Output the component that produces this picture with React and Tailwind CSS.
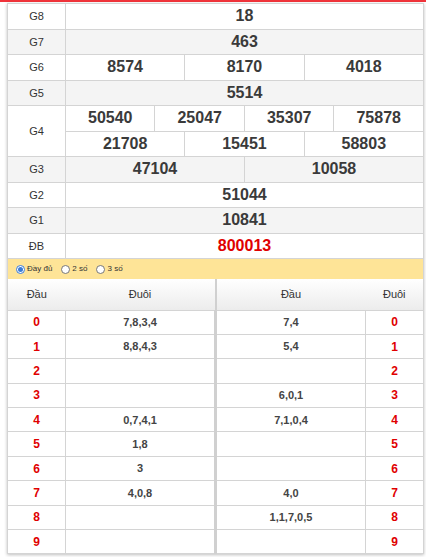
import React from 'react';

const prizes = [
    { label: 'G8', nums: ['18'] },
    { label: 'G7', nums: ['463'] },
    { label: 'G6', nums: ['8574', '8170', '4018'] },
    { label: 'G5', nums: ['5514'] },
    { label: 'G4', nums: ['50540', '25047', '35307', '75878'], more: ['21708', '15451', '58803'] },
    { label: 'G3', nums: ['47104', '10058'] },
    { label: 'G2', nums: ['51044'] },
    { label: 'G1', nums: ['10841'] },
    { label: 'ĐB', nums: ['800013'], red: true },
];

const loto = [
    ['7,8,3,4', '7,4'],
    ['8,8,4,3', '5,4'],
    ['', ''],
    ['', '6,0,1'],
    ['0,7,4,1', '7,1,0,4'],
    ['1,8', ''],
    ['3', ''],
    ['4,0,8', '4,0'],
    ['', '1,1,7,0,5'],
    ['', ''],
];

const span = { 1: 12, 2: 6, 3: 4, 4: 3 };

const NumCells = ({ nums, red }) =>
    nums.map((n, i) => (
        <td
            key={i}
            colSpan={span[nums.length]}
            className={`border border-[#d4d4d4] text-center text-[16px] font-bold ${red ? 'text-[#e00000]' : 'text-[#3a3a3a]'}`}
        >
            {n}
        </td>
    ));

const Radio = ({ checked, label }) => (
    <label className="flex items-center gap-[2px] mr-[9px]">
        <span className={`w-[9px] h-[9px] rounded-full border flex items-center justify-center bg-white ${checked ? 'border-[#3b7bd6]' : 'border-[#777]'}`}>
            {checked && <span className="w-[5px] h-[5px] rounded-full bg-[#3b7bd6]" />}
        </span>
        <span className="text-[8px] text-[#333]">{label}</span>
    </label>
);

export default function App() {
    return (
        <div className="w-[426px] h-[557px] bg-white" style={{ fontFamily: '"Liberation Sans", Arial, sans-serif' }}>
            <div className="h-[2px] bg-[#f0333a]" />
            <div className="ml-[7px] mt-[1px] w-[417px] shadow-[0_1px_3px_rgba(0,0,0,0.25)]">
                <table className="w-full table-fixed border-collapse">
                    <colgroup>
                        <col className="w-[58px]" />
                        {[...Array(12)].map((_, i) => <col key={i} />)}
                    </colgroup>
                    <tbody>
                        {prizes.map((p, i) => {
                            const bg = i % 2 === 1 ? 'bg-[#f4f4f4]' : 'bg-white';
                            if (p.more) {
                                return (
                                    <React.Fragment key={p.label}>
                                        <tr className={`h-[25.5px] ${bg}`}>
                                            <td rowSpan={2} className="border border-[#d4d4d4] text-center text-[11px] text-[#333]">{p.label}</td>
                                            <NumCells nums={p.nums} />
                                        </tr>
                                        <tr className={`h-[25.5px] ${bg}`}>
                                            <NumCells nums={p.more} />
                                        </tr>
                                    </React.Fragment>
                                );
                            }
                            return (
                                <tr key={p.label} className={`h-[25.5px] ${bg}`}>
                                    <td className="border border-[#d4d4d4] text-center text-[11px] text-[#333]">{p.label}</td>
                                    <NumCells nums={p.nums} red={p.red} />
                                </tr>
                            );
                        })}
                    </tbody>
                </table>

                <div className="h-[20px] bg-[#fee497] flex items-center pl-[8px] border-x border-[#d4d4d4]">
                    <Radio checked label="Đầy đủ" />
                    <Radio label="2 số" />
                    <Radio label="3 số" />
                </div>

                <table className="w-full table-fixed border-collapse">
                    <colgroup>
                        <col className="w-[58px]" />
                        <col className="w-[150px]" />
                        <col className="w-[150px]" />
                        <col />
                    </colgroup>
                    <thead>
                        <tr className="h-[31px] bg-gradient-to-b from-white to-[#ececec] text-[11px] text-[#333]">
                            <th className="font-normal border-l border-[#d4d4d4]">Đầu</th>
                            <th className="font-normal border-r-2 border-[#d0d0d0]">Đuôi</th>
                            <th className="font-normal">Đầu</th>
                            <th className="font-normal border-r border-[#d4d4d4]">Đuôi</th>
                        </tr>
                    </thead>
                    <tbody>
                        {loto.map((r, i) => (
                            <tr key={i} className="h-[24.4px] bg-white">
                                <td className="border border-[#d4d4d4] text-center text-[12px] font-bold text-[#e00000]">{i}</td>
                                <td className="border border-[#d4d4d4] border-r-[3px] border-r-[#d0d0d0] text-center text-[11px] font-bold text-[#444]">{r[0]}</td>
                                <td className="border border-[#d4d4d4] text-center text-[11px] font-bold text-[#444]">{r[1]}</td>
                                <td className="border border-[#d4d4d4] text-center text-[12px] font-bold text-[#e00000]">{i}</td>
                            </tr>
                        ))}
                    </tbody>
                </table>
            </div>
        </div>
    );
}
